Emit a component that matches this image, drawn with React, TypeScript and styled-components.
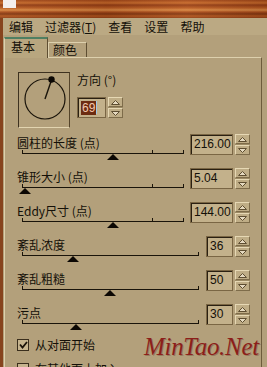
import React from 'react';
import styled, { createGlobalStyle } from 'styled-components';

const GlobalStyle = createGlobalStyle`
  html, body {
    margin: 0;
    padding: 0;
    background: #b3a07b;
  }
  body {
    font-family: "Noto Sans CJK SC", "DejaVu Sans", sans-serif;
  }
`;

const Window = styled.div`
  position: relative;
  width: 267px;
  height: 367px;
  overflow: hidden;
  background: #b3a07b;
  display: flex;
  flex-direction: column;
  font-size: 12px;
  color: #141008;
`;

const WoodBar = styled.div`
  flex: none;
  height: 18px;
  padding-left: 3px;
  box-sizing: border-box;
  background:
    linear-gradient(90deg, rgba(255, 200, 140, 0.08), rgba(60, 20, 0, 0.12) 40%, rgba(255, 180, 120, 0.1) 70%, rgba(60, 20, 0, 0.15)),
    linear-gradient(180deg, #9c4418 0, #c66a2c 3px, #8f3a14 5px, #b85c24 8px, #d88a46 10px, #a84c1c 12px, #7c3310 14px, #b0541f 16px, #8a3c16 18px);
`;

const TitleIcon = styled.div`
  width: 13px;
  height: 8px;
  background: #f4efee;
`;

const Body = styled.div`
  flex: 1;
  display: flex;
  flex-direction: column;
  border-left: 3px solid #86441e;
`;

const MenuBar = styled.div`
  flex: none;
  height: 17px;
  display: flex;
  align-items: center;
  gap: 12px;
  padding-left: 6px;
  background: #bba983;
  line-height: 17px;
`;

const MenuItem = styled.span`
  white-space: nowrap;

  u {
    text-decoration: underline;
  }
`;

const TabRow = styled.div`
  flex: none;
  height: 22px;
  display: flex;
  align-items: flex-end;
  padding-left: 1px;
`;

const Tab = styled.div<{ $active?: boolean }>`
  box-sizing: border-box;
  width: ${p => (p.$active ? 44 : 39)}px;
  height: ${p => (p.$active ? 21 : 15)}px;
  margin-bottom: ${p => (p.$active ? -1 : 0)}px;
  position: relative;
  z-index: ${p => (p.$active ? 2 : 1)};
  padding-left: ${p => (p.$active ? 6 : 4)}px;
  line-height: ${p => (p.$active ? 16 : 14)}px;
  background: ${p => (p.$active ? '#b8a67f' : '#b3a07b')};
  border-top: ${p => (p.$active ? '2px solid #4f7f62' : '1px solid #ddd0ad')};
  border-left: 1px solid #ddd0ad;
  border-right: 1px solid #5e4e32;
`;

const Panel = styled.div`
  flex: 1;
  margin-left: 1px;
  width: 258px;
  box-sizing: border-box;
  border-top: 1px solid #ddd0ad;
  border-left: 1px solid #ddd0ad;
  border-right: 1px solid #6e5c3c;
  padding: 14px 11px 0 13px;
  display: flex;
  flex-direction: column;
`;

const DialRow = styled.div`
  display: flex;
  gap: 7px;
  height: 56px;
  margin-bottom: 6px;
`;

const DialBox = styled.div`
  width: 52px;
  height: 56px;
  box-sizing: border-box;
  border: 1px solid #3e3220;
  border-right-color: #54442a;
  border-bottom-color: #e2d4b0;
`;

const DirCol = styled.div`
  display: flex;
  flex-direction: column;
  padding-top: 1px;
`;

const DirLabel = styled.div`
  line-height: 14px;
  height: 14px;
`;

const DirInputRow = styled.div`
  display: flex;
  gap: 2px;
  margin-top: 10px;
`;

const Field = styled.div<{ $w: number }>`
  box-sizing: border-box;
  width: ${p => p.$w}px;
  height: 21px;
  border: 1px solid #7a6644;
  box-shadow: inset 1px 1px 0 #2a2012;
  background: #c3b18b;
  font-family: "Liberation Sans", "DejaVu Sans", sans-serif;
  font-size: 12px;
  line-height: 19px;
  padding-left: 3px;
  display: flex;
  align-items: center;
`;

const Selected = styled.span`
  background: #6c2c12;
  color: #f4c8ae;
  line-height: 14px;
  padding: 0 1px;
`;

const Caret = styled.span`
  display: inline-block;
  width: 1px;
  height: 13px;
  background: #9cc8e8;
`;

const SpinBox = styled.div`
  display: flex;
  flex-direction: column;
  gap: 1px;
  width: 15px;
  height: 21px;
  background: #9c8a64;
`;

const SpinButton = styled.div`
  flex: 1;
  box-sizing: border-box;
  background: #bfad86;
  border-top: 1px solid #e6d8b4;
  border-left: 1px solid #e6d8b4;
  border-bottom: 1px solid #7e6c4a;
  border-right: 1px solid #7e6c4a;
  display: flex;
  align-items: center;
  justify-content: center;
`;

const SliderRow = styled.div`
  display: flex;
  justify-content: space-between;
  align-items: flex-start;
  height: 34px;
`;

const SliderCol = styled.div`
  display: flex;
  flex-direction: column;
`;

const RowLabel = styled.div`
  margin-left: -1px;
  height: 16px;
  line-height: 16px;
  padding-top: 1px;
  box-sizing: border-box;
  white-space: nowrap;
`;

const Track = styled.div<{ $w: number }>`
  position: relative;
  margin-left: 4px;
  margin-top: 3px;
  width: ${p => p.$w}px;
  height: 1px;
  background: #1a140a;
`;

const Tick = styled.div`
  position: absolute;
  bottom: 0;
  width: 1px;
  height: 4px;
  background: #1a140a;
`;

const Thumb = styled.div`
  position: absolute;
  top: 1px;
  width: 0;
  height: 0;
  margin-left: -6px;
  border-left: 6px solid transparent;
  border-right: 6px solid transparent;
  border-bottom: 6px solid #0c0804;
`;

const RightGroup = styled.div`
  display: flex;
  gap: 2px;
`;

const CheckRow = styled.div`
  display: flex;
  align-items: center;
  gap: 6px;
  height: 12px;
  margin-top: 1px;
  margin-left: -1px;
  margin-bottom: 11px;
  line-height: 12px;
`;

const CheckBox = styled.div`
  width: 12px;
  height: 12px;
  box-sizing: border-box;
  border: 1px solid #3a2e1c;
  background: #c6b48e;
  display: flex;
  align-items: center;
  justify-content: center;
`;

const Watermark = styled.div`
  position: absolute;
  left: 144px;
  top: 333px;
  font-family: "Liberation Serif", "DejaVu Serif", serif;
  font-style: italic;
  font-size: 25px;
  color: #8c1e1a;
  text-shadow: 1px 1px 0 rgba(60, 10, 0, 0.25);
  letter-spacing: -0.3px;
  white-space: nowrap;
`;

const Spinner = () => (
  <SpinBox>
    <SpinButton>
      <svg width="9" height="5" viewBox="0 0 9 5">
        <path d="M0.5 4.5 L4.5 0.5 L8.5 4.5 Z" fill="#e6dac0" stroke="#5e4e32" strokeWidth="1" />
      </svg>
    </SpinButton>
    <SpinButton>
      <svg width="9" height="5" viewBox="0 0 9 5">
        <path d="M0.5 0.5 L4.5 4.5 L8.5 0.5 Z" fill="#e6dac0" stroke="#5e4e32" strokeWidth="1" />
      </svg>
    </SpinButton>
  </SpinBox>
);

interface SliderProps {
  label: string;
  value: string;
  thumb: number;
  wide?: boolean;
}

const SliderField = ({ label, value, thumb, wide }: SliderProps) => {
  const w = wide ? 177 : 162;
  return (
    <SliderRow>
      <SliderCol>
        <RowLabel>{label}</RowLabel>
        <Track $w={w}>
          <Tick style={{ left: 0 }} />
          {!wide && <Tick style={{ left: 130 }} />}
          <Tick style={{ left: w - 1 }} />
          <Thumb style={{ left: thumb }} />
        </Track>
      </SliderCol>
      <RightGroup>
        <Field $w={wide ? 27 : 43}>{value}</Field>
        <Spinner />
      </RightGroup>
    </SliderRow>
  );
};

const sliders: SliderProps[] = [
  { label: '圆柱的长度 (点)', value: '216.00', thumb: 91 },
  { label: '锥形大小 (点)', value: '5.04', thumb: 3 },
  { label: 'Eddy尺寸 (点)', value: '144.00', thumb: 91 },
  { label: '紊乱浓度', value: '36', thumb: 51, wide: true },
  { label: '紊乱粗糙', value: '50', thumb: 88, wide: true },
  { label: '污点', value: '30', thumb: 54, wide: true },
];

const Check = () => (
  <svg width="9" height="8" viewBox="0 0 9 8">
    <path d="M1 3.5 L3.5 6.5 L8 1" fill="none" stroke="#1a1208" strokeWidth="1.8" />
  </svg>
);

export default function App() {
  return (
    <Window>
      <GlobalStyle />
      <WoodBar>
        <TitleIcon />
      </WoodBar>
      <Body>
        <MenuBar>
          <MenuItem>编辑</MenuItem>
          <MenuItem>
            过滤器(<u>T</u>)
          </MenuItem>
          <MenuItem>查看</MenuItem>
          <MenuItem>设置</MenuItem>
          <MenuItem>帮助</MenuItem>
        </MenuBar>
        <TabRow>
          <Tab $active>基本</Tab>
          <Tab>颜色</Tab>
        </TabRow>
        <Panel>
          <DialRow>
            <DialBox>
              <svg width="50" height="54" viewBox="0 0 50 54">
                <circle cx="26" cy="26" r="20" fill="none" stroke="#1a140a" strokeWidth="1.2" />
                <line x1="26" y1="26" x2="32.5" y2="7" stroke="#1a140a" strokeWidth="1.4" />
                <circle cx="32.5" cy="6.5" r="3.2" fill="#0c0804" />
              </svg>
            </DialBox>
            <DirCol>
              <DirLabel>方向 (°)</DirLabel>
              <DirInputRow>
                <Field $w={29}>
                  <Selected>69</Selected>
                  <Caret />
                </Field>
                <Spinner />
              </DirInputRow>
            </DirCol>
          </DialRow>
          {sliders.map(s => (
            <SliderField key={s.label} {...s} />
          ))}
          <CheckRow>
            <CheckBox>
              <Check />
            </CheckBox>
            <span>从对面开始</span>
          </CheckRow>
          <CheckRow>
            <CheckBox />
            <span>在其他面上加入</span>
          </CheckRow>
        </Panel>
      </Body>
      <Watermark>MinTao.Net</Watermark>
    </Window>
  );
}
